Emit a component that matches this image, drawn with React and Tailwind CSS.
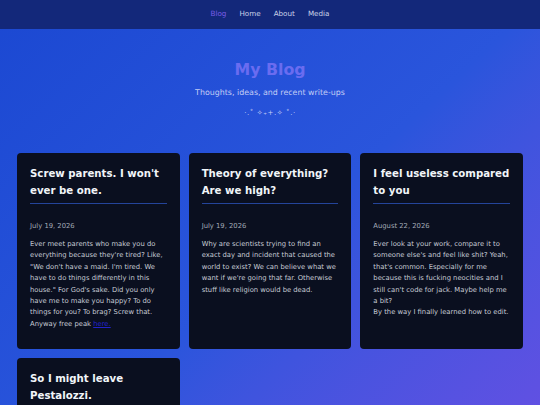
const posts = [
  {
    title: "Screw parents. I won't ever be one.",
    date: 'July 19, 2026',
    body: (
      <>
        Ever meet parents who make you do everything because they're tired? Like, "We don't have a maid. I'm tired. We have to do things differently in this house." For God's sake. Did you only have me to make you happy? To do things for you? To brag? Screw that. Anyway free peak{' '}
        <a href="#" className="text-[#2222cc] underline">here.</a>
      </>
    ),
  },
  {
    title: 'Theory of everything? Are we high?',
    date: 'July 19, 2026',
    body: "Why are scientists trying to find an exact day and incident that caused the world to exist? We can believe what we want if we're going that far. Otherwise stuff like religion would be dead.",
  },
  {
    title: 'I feel useless compared to you',
    date: 'August 22, 2026',
    body: (
      <>
        Ever look at your work, compare it to someone else's and feel like shit? Yeah, that's common. Especially for me because this is fucking neocities and I still can't code for jack. Maybe help me a bit?
        <br />
        By the way I finally learned how to edit.
      </>
    ),
  },
  {
    title: 'So I might leave Pestalozzi.',
    date: 'September 2, 2026',
    body: 'Long story short, I might be moving schools soon.',
  },
]

const links = ['Blog', 'Home', 'About', 'Media']

const PostCard = ({ post }) => (
  <div className="bg-[#0a0f1f] rounded-[4px] px-[13px] pt-[12px] pb-[19px]">
    <h2 className="text-[10.2px] leading-[17px] font-bold text-[#f1f5f9] pb-[4px] border-b border-[#24449a]">
      {post.title}
    </h2>
    <div className="mt-[17px] text-[6.8px] leading-[11px] text-[#a3abb8]">{post.date}</div>
    <p className="mt-[7px] text-[6.8px] leading-[11.4px] text-[#c6cbd5]">{post.body}</p>
  </div>
)

export default function App() {
  return (
    <div className="min-h-screen bg-gradient-to-br from-[#1b48d2] via-[#2a55dc] to-[#6a4fe4] font-['DejaVu_Sans',sans-serif]">
      <nav className="h-[29px] bg-[#13287a] flex items-center justify-center gap-[13px] text-[7.2px]">
        {links.map((l) => (
          <a key={l} href="#" className={l === 'Blog' ? 'text-[#7b5de8]' : 'text-[#c9d2e8]'}>
            {l}
          </a>
        ))}
      </nav>

      <header className="flex flex-col items-center pt-[30px]">
        <h1 className="text-[15.8px] leading-[22px] font-bold text-[#6a6cf0]">My Blog</h1>
        <p className="mt-[7px] text-[7.9px] leading-[10px] text-[#c3cdf5]">Thoughts, ideas, and recent write-ups</p>
        <div className="mt-[10px] text-[7px] leading-[10px] text-[#c3cdf5] tracking-[0.6px]">·.˚ ✧₊+.✧ ˚.·</div>
      </header>

      <main className="grid grid-cols-3 gap-[9px] px-[17px] pt-[35px] pb-[20px]">
        {posts.map((p) => (
          <PostCard key={p.title} post={p} />
        ))}
      </main>
    </div>
  )
}
